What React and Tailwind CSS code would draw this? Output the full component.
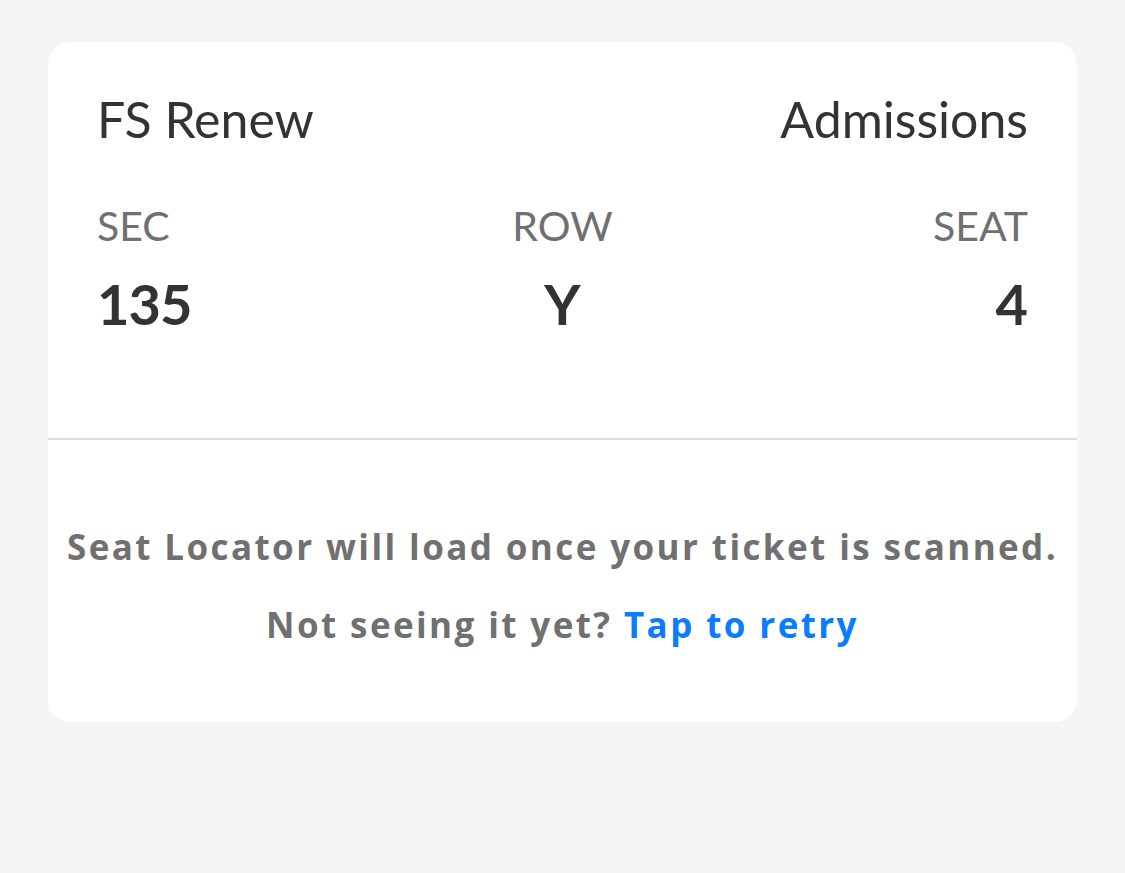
export default function App() {
  const font = { fontFamily: 'Lato, "Open Sans", sans-serif' };
  return (
    <div className="min-h-screen w-full bg-[#f5f5f5] pt-[42px] px-[48px]" style={font}>
      <div className="w-[1029px] h-[680px] bg-white rounded-[22px] flex flex-col">
        <div className="px-[49px] pt-[47px] h-[396px]">
          <div className="flex items-center justify-between text-[50px] leading-[60px] text-[#333333]">
            <span>FS Renew</span>
            <span>Admissions</span>
          </div>
          <div className="grid grid-cols-3 mt-[53px]">
            <div className="text-left">
              <div className="text-[41px] leading-[48px] text-[#707070]">SEC</div>
              <div className="text-[56px] leading-[70px] font-bold text-[#333333] mt-[19px] tracking-[-1px]">135</div>
            </div>
            <div className="text-center">
              <div className="text-[41px] leading-[48px] text-[#707070]">ROW</div>
              <div className="text-[56px] leading-[70px] font-bold text-[#333333] mt-[19px]">Y</div>
            </div>
            <div className="text-right">
              <div className="text-[41px] leading-[48px] text-[#707070]">SEAT</div>
              <div className="text-[56px] leading-[70px] font-bold text-[#333333] mt-[19px]">4</div>
            </div>
          </div>
        </div>
        <div className="h-[2px] bg-[#dddddd]" />
        <div
          className="flex flex-col items-center pt-[84px] text-[35px] font-bold text-[#707070] leading-[46px] tracking-[2.4px]"
          style={{ fontFamily: '"Open Sans", Lato, sans-serif' }}
        >
          <p>Seat Locator will load once your ticket is scanned.</p>
          <p className="mt-[32px]">
            Not seeing it yet? <span className="text-[#0a7cff]">Tap to retry</span>
          </p>
        </div>
      </div>
    </div>
  );
}
